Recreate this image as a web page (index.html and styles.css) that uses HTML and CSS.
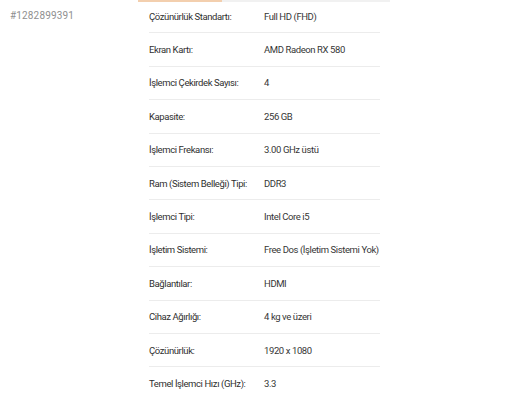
FILE: index.html
```html
<!DOCTYPE html>
<html lang="tr">
<head>
<meta charset="utf-8">
<link rel="stylesheet" href="styles.css">
</head>
<body>
<div class="page">
  <aside class="side">
    <div class="ad-id">#1282899391</div>
  </aside>
  <main class="card">
    <div class="tabs">
      <span class="tab active"></span>
      <span class="tab rest"></span>
    </div>
    <ul class="specs">
      <li class="row"><span class="label">Çözünürlük Standartı:</span><span class="value">Full HD (FHD)</span></li>
      <li class="row"><span class="label">Ekran Kartı:</span><span class="value">AMD Radeon RX 580</span></li>
      <li class="row"><span class="label">İşlemci Çekirdek Sayısı:</span><span class="value">4</span></li>
      <li class="row"><span class="label">Kapasite:</span><span class="value">256 GB</span></li>
      <li class="row"><span class="label">İşlemci Frekansı:</span><span class="value">3.00 GHz üstü</span></li>
      <li class="row"><span class="label">Ram (Sistem Belleği) Tipi:</span><span class="value">DDR3</span></li>
      <li class="row"><span class="label">İşlemci Tipi:</span><span class="value">Intel Core i5</span></li>
      <li class="row"><span class="label">İşletim Sistemi:</span><span class="value">Free Dos (İşletim Sistemi Yok)</span></li>
      <li class="row"><span class="label">Bağlantılar:</span><span class="value">HDMI</span></li>
      <li class="row"><span class="label">Cihaz Ağırlığı:</span><span class="value">4 kg ve üzeri</span></li>
      <li class="row"><span class="label">Çözünürlük:</span><span class="value">1920 x 1080</span></li>
      <li class="row"><span class="label">Temel İşlemci Hızı (GHz):</span><span class="value">3.3</span></li>
    </ul>
  </main>
</div>
</body>
</html>
```
FILE: styles.css
```css
* { box-sizing: border-box; }
html, body {
  margin: 0;
  padding: 0;
  background: #ffffff;
  font-family: Roboto, "Liberation Sans", sans-serif;
  overflow: hidden;
}
.page {
  display: flex;
  align-items: flex-start;
  width: 528px;
  height: 396px;
}
.side {
  width: 130px;
  flex: none;
  padding: 10px 0 0 10px;
}
.ad-id {
  font-size: 10px;
  color: #8f8f8f;
  letter-spacing: 0.15px;
  line-height: 12px;
}
.card {
  width: 260px;
  flex: none;
  display: flex;
  flex-direction: column;
}
.tabs {
  display: flex;
  height: 2px;
  padding-left: 8px;
}
.tab.active {
  width: 84px;
  background: #f3cfae;
}
.tab.rest {
  flex: 1;
  background: #f1f1f1;
}
.specs {
  list-style: none;
  margin: -2px 0 0 0;
  padding: 0 10px 0 19px;
}
.row {
  display: flex;
  align-items: center;
  height: 33.4px;
  border-bottom: 1px solid #ececec;
  font-size: 9.5px;
  letter-spacing: -0.4px;
  color: #2f2f2f;
  white-space: nowrap;
}
.row:last-child {
  border-bottom-color: #e4e4e4;
  margin-left: -19px;
  margin-right: -2px;
  padding-left: 19px;
}
.label {
  width: 115px;
  flex: none;
}
.value {
  color: #363636;
}
```
